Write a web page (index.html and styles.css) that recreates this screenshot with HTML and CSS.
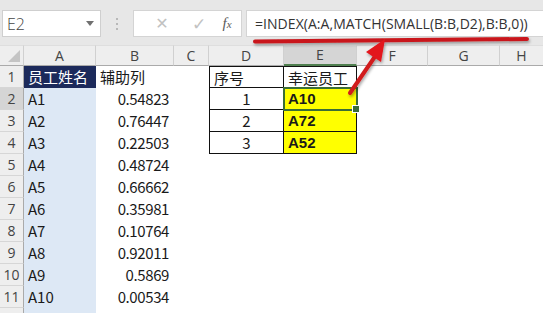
FILE: index.html
```html
<!DOCTYPE html>
<html>
<head>
<meta charset="utf-8">
<link rel="stylesheet" href="styles.css">
</head>
<body>
<div class="app">
  <div class="toolbar">
    <div class="namebox"><span class="name">E2</span><span class="caret"></span></div>
    <div class="grip"><i></i><i></i><i></i></div>
    <div class="buttons">
      <span class="btn cancel">✕</span>
      <span class="btn ok">✓</span>
      <span class="btn fx"><i>f</i><i class="x">x</i></span>
    </div>
    <div class="formula">=INDEX(A:A,MATCH(SMALL(B:B,D2),B:B,0))</div>
  </div>
  <div class="sheet">
    <div class="hd corner"><span class="tri"></span></div>
    <div class="hd col">A</div>
    <div class="hd col">B</div>
    <div class="hd col">C</div>
    <div class="hd col">D</div>
    <div class="hd col sel">E</div>
    <div class="hd col">F</div>
    <div class="hd col">G</div>
    <div class="hd col last">H</div>

    <div class="rh">1</div>
    <div class="c a-head">员工姓名</div>
    <div class="c">辅助列</div>
    <div class="c"></div>
    <div class="c t tl">序号</div>
    <div class="c t tr">幸运员工</div>
    <div class="c"></div><div class="c"></div><div class="c"></div>

    <div class="rh sel">2</div>
    <div class="c a">A1</div>
    <div class="c num">0.54823</div>
    <div class="c"></div>
    <div class="c t tl ctr">1</div>
    <div class="c t tr y active">A10</div>
    <div class="c"></div><div class="c"></div><div class="c"></div>

    <div class="rh">3</div>
    <div class="c a">A2</div>
    <div class="c num">0.76447</div>
    <div class="c"></div>
    <div class="c t tl ctr">2</div>
    <div class="c t tr y">A72</div>
    <div class="c"></div><div class="c"></div><div class="c"></div>

    <div class="rh">4</div>
    <div class="c a">A3</div>
    <div class="c num">0.22503</div>
    <div class="c"></div>
    <div class="c t tl ctr">3</div>
    <div class="c t tr y">A52</div>
    <div class="c"></div><div class="c"></div><div class="c"></div>

    <div class="rh">5</div>
    <div class="c a">A4</div>
    <div class="c num">0.48724</div>
    <div class="c"></div><div class="c"></div><div class="c"></div><div class="c"></div><div class="c"></div><div class="c"></div>

    <div class="rh">6</div>
    <div class="c a">A5</div>
    <div class="c num">0.66662</div>
    <div class="c"></div><div class="c"></div><div class="c"></div><div class="c"></div><div class="c"></div><div class="c"></div>

    <div class="rh">7</div>
    <div class="c a">A6</div>
    <div class="c num">0.35981</div>
    <div class="c"></div><div class="c"></div><div class="c"></div><div class="c"></div><div class="c"></div><div class="c"></div>

    <div class="rh">8</div>
    <div class="c a">A7</div>
    <div class="c num">0.10764</div>
    <div class="c"></div><div class="c"></div><div class="c"></div><div class="c"></div><div class="c"></div><div class="c"></div>

    <div class="rh">9</div>
    <div class="c a">A8</div>
    <div class="c num">0.92011</div>
    <div class="c"></div><div class="c"></div><div class="c"></div><div class="c"></div><div class="c"></div><div class="c"></div>

    <div class="rh">10</div>
    <div class="c a">A9</div>
    <div class="c num">0.5869</div>
    <div class="c"></div><div class="c"></div><div class="c"></div><div class="c"></div><div class="c"></div><div class="c"></div>

    <div class="rh">11</div>
    <div class="c a">A10</div>
    <div class="c num">0.00534</div>
    <div class="c"></div><div class="c"></div><div class="c"></div><div class="c"></div><div class="c"></div><div class="c"></div>

    <div class="rh"></div>
    <div class="c a"></div>
    <div class="c"></div>
    <div class="c"></div><div class="c"></div><div class="c"></div><div class="c"></div><div class="c"></div><div class="c"></div>
  </div>
  <svg class="annot" width="543" height="313" viewBox="0 0 543 313">
    <defs>
      <filter id="sh" x="-10%" y="-50%" width="120%" height="300%">
        <feGaussianBlur in="SourceAlpha" stdDeviation="1.5"/>
        <feOffset dx="1" dy="2" result="b"/>
        <feComponentTransfer><feFuncA type="linear" slope="0.35"/></feComponentTransfer>
        <feMerge><feMergeNode/><feMergeNode in="SourceGraphic"/></feMerge>
      </filter>
    </defs>
    <g filter="url(#sh)">
      <path d="M255 41.5 L527 39" stroke="#c9171c" stroke-width="4" stroke-linecap="round" fill="none"/>
      <path d="M350 93 L376 55" stroke="#d11a1f" stroke-width="4" stroke-linecap="round" fill="none"/>
      <polygon points="385,39 381,62 366,52" fill="#e3141c"/>
    </g>
  </svg>
</div>
</body>
</html>
```
FILE: styles.css
```css
* { box-sizing: border-box; }
html, body { margin: 0; padding: 0; }
body {
  width: 543px;
  height: 313px;
  overflow: hidden;
  background: #ffffff;
  font-family: "Noto Sans CJK SC", "Noto Sans", sans-serif;
  color: #222;
}
.app { position: relative; width: 543px; height: 313px; overflow: hidden; }

.toolbar {
  height: 45px;
  background: #e7e7e7;
  display: flex;
  align-items: flex-start;
  padding-top: 10px;
  padding-left: 2px;
}
.namebox {
  width: 99px;
  height: 27px;
  background: #fff;
  border: 1px solid #cfcfcf;
  display: flex;
  align-items: center;
  justify-content: space-between;
  padding: 0 6px 0 4px;
}
.name { font-family: "Open Sans", "Noto Sans", sans-serif; font-size: 16px; color: #444; font-weight: 300; }
.caret {
  width: 0; height: 0;
  border-left: 4px solid transparent;
  border-right: 4px solid transparent;
  border-top: 5px solid #707070;
}
.grip {
  width: 32px;
  height: 27px;
  display: flex;
  flex-direction: column;
  align-items: center;
  justify-content: center;
  gap: 3px;
}
.grip i { display: block; width: 2px; height: 2px; background: #b8b8b8; }
.buttons {
  width: 109px;
  height: 27px;
  background: #fff;
  border: 1px solid #d4d4d4;
  display: flex;
  align-items: center;
  padding-left: 10px;
  gap: 0;
}
.btn { display: block; text-align: center; color: #c2c2c2; font-family: "DejaVu Sans", sans-serif; }
.cancel { width: 36px; font-size: 16px; }
.ok { width: 38px; font-size: 17px; }
.fx { width: 18px; font-family: "Liberation Serif", serif; color: #5a5a5a; font-size: 15px; }
.fx .x { font-size: 11px; }
.formula {
  margin-left: 4px;
  flex: 1;
  height: 27px;
  background: #fff;
  border: 1px solid #d4d4d4;
  border-right: none;
  padding-left: 8px;
  font-family: "Open Sans", "Noto Sans", sans-serif;
  font-size: 14px;
  letter-spacing: 0.05px;
  color: #333;
  line-height: 25px;
  white-space: nowrap;
}

.sheet {
  display: grid;
  grid-template-columns: 24px 72px 78px 35px 75px 73px 71px 72px 43px;
  grid-template-rows: 21px;
  grid-auto-rows: 22px;
}
.hd {
  background: #eeeeee;
  border-bottom: 1px solid #aaaaaa;
  border-right: 1px solid #d0d0d0;
  border-top: 1px solid #dedede;
  font-family: "Open Sans", "Noto Sans", sans-serif;
  font-size: 14px;
  color: #444;
  display: flex;
  align-items: center;
  justify-content: center;
  line-height: 1;
}
.hd.sel { background: #d5d5d5; border-bottom: 2px solid #4f7f4f; }
.hd.last { border-right: none; }
.corner { justify-content: flex-end; align-items: flex-end; padding: 0 3px 3px 0; }
.tri {
  width: 0; height: 0;
  border-left: 12px solid transparent;
  border-bottom: 12px solid #c4c4c4;
}
.rh {
  background: #eeeeee;
  border-right: 1px solid #aaaaaa;
  border-bottom: 1px solid #d6d6d6;
  font-family: "Open Sans", "Noto Sans", sans-serif;
  font-size: 14px;
  color: #444;
  display: flex;
  align-items: center;
  justify-content: center;
}
.rh.sel { background: #d5d5d5; }
.c {
  font-size: 15px;
  line-height: 22px;
  padding: 0 4px;
  white-space: nowrap;
  overflow: visible;
  color: #1a1a1a;
}
.a { background: #dde8f5; }
.a-head { background: #1c2a5b; color: #fff; }
.num { text-align: right; padding-right: 5px; letter-spacing: -0.4px; }
.t { border-bottom: 1px solid #111; border-right: 1px solid #111; }
.tl { border-left: 1px solid #111; }
.sheet > .t:nth-child(n+14):nth-child(-n+15) { border-top: 1px solid #111; }
.ctr { text-align: center; }
.y { background: #ffff00; font-weight: bold; font-family: "Liberation Sans", "Noto Sans CJK SC", sans-serif; }
.active { position: relative; outline: 2px solid #3b6e36; outline-offset: -1px; }
.active::after {
  content: "";
  position: absolute;
  right: -4px;
  bottom: -4px;
  width: 6px;
  height: 6px;
  background: #3b6e36;
  border: 1px solid #fff;
}
.annot { position: absolute; left: 0; top: 0; pointer-events: none; }
```
